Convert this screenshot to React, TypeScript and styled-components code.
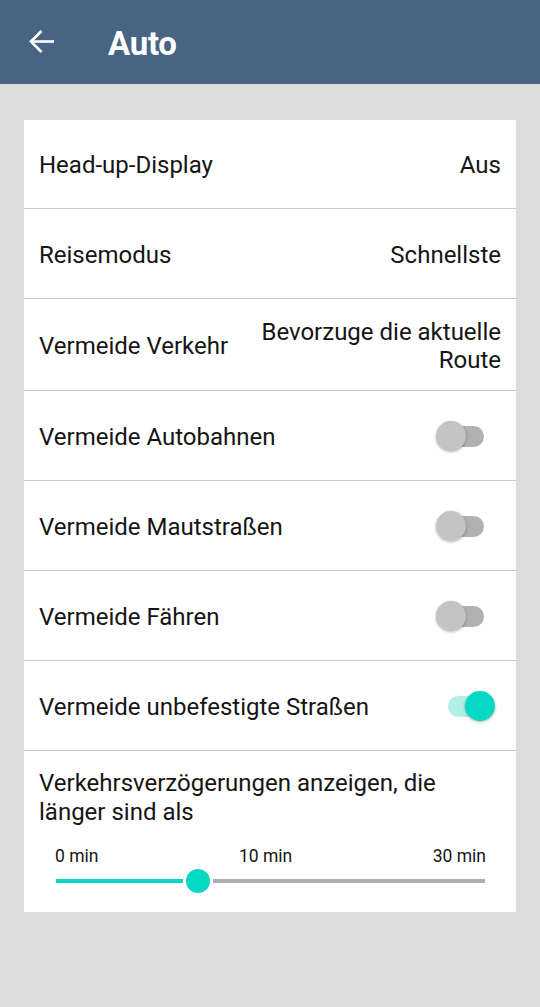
import React from "react"
import styled, { createGlobalStyle } from "styled-components"

const GlobalStyle = createGlobalStyle`
  html, body {
    margin: 0;
    padding: 0;
    background: #dcdcdc;
    font-family: Roboto, "Noto Sans", Arial, sans-serif;
  }
`

const Page = styled.div`
  width: 540px;
  min-height: 1007px;
  background: #dcdcdc;
`

const Header = styled.header`
  height: 84px;
  background: #476482;
  display: flex;
  align-items: center;
  padding-left: 29px;
  box-sizing: border-box;
`

const BackButton = styled.button`
  border: none;
  background: none;
  padding: 0;
  width: 25px;
  height: 25px;
  display: flex;
  margin-top: -2px;
`

const Title = styled.h1`
  margin: 3px 0 0 54px;
  color: #fff;
  font-size: 33px;
  font-weight: 700;
  letter-spacing: -0.3px;
`

const Card = styled.div`
  margin: 36px 24px 0;
  background: #fff;
`

const Row = styled.div<{ $h: number }>`
  display: flex;
  align-items: center;
  justify-content: space-between;
  height: ${(p) => p.$h}px;
  padding: 2px 15px 0 15px;
  border-bottom: 1px solid #c9c9c9;
  box-sizing: border-box;
`

const Label = styled.span`
  font-size: 24px;
  color: #151515;
`

const Value = styled.span`
  font-size: 24px;
  color: #151515;
  text-align: right;
  line-height: 28px;
  max-width: 260px;
`

const Toggle = styled.div`
  position: relative;
  width: 50px;
  height: 30px;
  margin: -2px 15px 0 0;
  flex-shrink: 0;
`

const Track = styled.div<{ $on?: boolean }>`
  position: absolute;
  left: ${(p) => (p.$on ? 12 : 10)}px;
  right: ${(p) => (p.$on ? 6 : 2)}px;
  top: 5px;
  height: 21px;
  border-radius: 11px;
  background: ${(p) => (p.$on ? "#b2efe6" : "#b1b1b1")};
`

const Thumb = styled.div<{ $on?: boolean }>`
  position: absolute;
  top: 0;
  left: ${(p) => (p.$on ? 29 : 0)}px;
  width: 30px;
  height: 30px;
  border-radius: 50%;
  background: ${(p) => (p.$on ? "#04d7c3" : "#c4c4c4")};
  box-shadow: 0 1px 3px rgba(0, 0, 0, 0.3);
`

const SliderSection = styled.div`
  padding: 18px 15px 19px;
`

const SliderTitle = styled.div`
  font-size: 24px;
  line-height: 29px;
  color: #151515;
`

const Ticks = styled.div`
  display: flex;
  justify-content: space-between;
  padding: 0 15px 0 16px;
  margin-top: 19px;
  font-size: 17.5px;
  color: #151515;
`

const SliderTrack = styled.div`
  position: relative;
  height: 24px;
  margin: 3px 16px 0 17px;
`

const TrackLine = styled.div<{ $active?: boolean }>`
  position: absolute;
  top: 10px;
  height: 4px;
  background: ${(p) => (p.$active ? "#04d7c3" : "#adadad")};
`

const SliderThumb = styled.div`
  position: absolute;
  top: 0;
  width: 24px;
  height: 24px;
  border-radius: 50%;
  background: #04d7c3;
`

function Switch({ on }: { on?: boolean }) {
  return (
    <Toggle>
      <Track $on={on} />
      <Thumb $on={on} />
    </Toggle>
  )
}

export default function App() {
  const pos = 0.333
  const width = 427
  const center = pos * width
  return (
    <Page>
      <GlobalStyle />
      <Header>
        <BackButton aria-label="Zurück">
          <svg width="25" height="25" viewBox="0 0 25 25" fill="none" stroke="#fff" strokeWidth="2.6">
            <path d="M25 12.5H2.5" />
            <path d="M12.5 2L2 12.5L12.5 23" />
          </svg>
        </BackButton>
        <Title>Auto</Title>
      </Header>
      <Card>
        <Row $h={89}>
          <Label>Head-up-Display</Label>
          <Value>Aus</Value>
        </Row>
        <Row $h={90}>
          <Label>Reisemodus</Label>
          <Value>Schnellste</Value>
        </Row>
        <Row $h={92}>
          <Label>Vermeide Verkehr</Label>
          <Value>Bevorzuge die aktuelle Route</Value>
        </Row>
        <Row $h={90}>
          <Label>Vermeide Autobahnen</Label>
          <Switch />
        </Row>
        <Row $h={90}>
          <Label>Vermeide Mautstraßen</Label>
          <Switch />
        </Row>
        <Row $h={90}>
          <Label>Vermeide Fähren</Label>
          <Switch />
        </Row>
        <Row $h={90}>
          <Label>Vermeide unbefestigte Straßen</Label>
          <Switch on />
        </Row>
        <SliderSection>
          <SliderTitle>Verkehrsverzögerungen anzeigen, die länger sind als</SliderTitle>
          <Ticks>
            <span>0 min</span>
            <span>10 min</span>
            <span>30 min</span>
          </Ticks>
          <SliderTrack>
            <TrackLine $active style={{ left: 0, width: center - 15 }} />
            <SliderThumb style={{ left: center - 12 }} />
            <TrackLine style={{ left: center + 15, right: 0 }} />
          </SliderTrack>
        </SliderSection>
      </Card>
    </Page>
  )
}
